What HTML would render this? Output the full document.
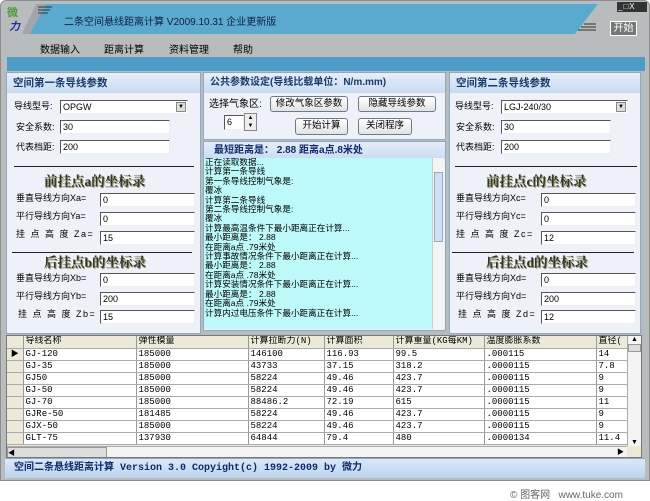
<!DOCTYPE html>
<html><head><meta charset="utf-8"><style>
*{margin:0;padding:0;box-sizing:border-box}
body{width:650px;height:499px;background:#fff;position:relative;overflow:hidden;font-family:"Liberation Sans","Noto Sans CJK SC",sans-serif;font-size:10px;color:#000}
.a{position:absolute}
.frame{left:0;top:0;width:650px;height:481px;background:#b9bcbc;border-radius:6px 6px 0 0;border:1px solid #8a8e90}
.panel{background:#eef2f8;border:1px solid #8fa8c4}
.hdr{position:absolute;left:0;right:0;top:0;height:20px;background:linear-gradient(#e6eef9,#c8dbf1);color:#1a3a6a;font-weight:bold;font-size:10.5px;line-height:20px;padding-left:6px;white-space:nowrap}
.inp{position:absolute;background:#fff;border-top:1px solid #555;border-left:1px solid #555;border-bottom:1px solid #eee;border-right:1px solid #eee;font-size:9px;line-height:12px;padding-left:2px;height:14px}
.lbl{position:absolute;font-size:9px;line-height:11px;white-space:nowrap}
.ttl{position:absolute;font-family:"Liberation Serif","Noto Serif CJK SC",serif;font-weight:bold;font-size:13.5px;line-height:16px;color:#333;text-shadow:1px 1px 0 #9a9a60;white-space:nowrap}
.line{position:absolute;height:1px;background:#222}
.btn{position:absolute;background:linear-gradient(#fff,#e2e2e2);border:1px solid #6a7a90;border-radius:3px;font-size:9.5px;text-align:center;line-height:14px}
.grid td{border-right:1px solid #999;border-bottom:1px solid #aaa;height:12px;line-height:11px;font-size:9px;padding:0 0 0 2px;white-space:nowrap;overflow:hidden;font-family:"Liberation Mono","Noto Sans CJK SC",monospace}
.grid{border-collapse:collapse;table-layout:fixed;background:#fff}
.grid .rh{background:#ece9d8;padding:0}
.grid tr.h td{background:#ece9d8}
</style></head><body>
<div class="a frame"></div>
<svg class="a" style="left:0;top:0" width="650" height="56">
<polygon points="46,4 598,4 598,34 30,34" fill="#5aa9cf"/>
<polygon points="36,4 46,4 30,34 22,34" fill="#a0a6aa"/>
<line x1="38" y1="7" x2="52" y2="7" stroke="#333"/><line x1="38" y1="10" x2="50" y2="10" stroke="#333"/><line x1="38" y1="13" x2="48" y2="13" stroke="#333"/>
<polygon points="598,4 603,4 603,34 575,34" fill="#b9bcbc"/>
<line x1="578" y1="30" x2="596" y2="30" stroke="#333"/><line x1="581" y1="27" x2="596" y2="27" stroke="#333"/><line x1="584" y1="24" x2="596" y2="24" stroke="#333"/>
<rect x="617" y="2" width="30" height="10" fill="#333"/>
</svg>
<div class="a" style="left:7px;top:4px;font-size:11px;font-weight:bold;color:#4a9a3a">微</div>
<div class="a" style="left:9px;top:18px;font-size:11px;font-weight:bold;font-style:italic;color:#2030a0">力</div>
<div class="a" style="left:64px;top:13px;font-size:10px;color:#102040">二条空间悬线距离计算 V2009.10.31 企业更新版</div>
<div class="a" style="left:618px;top:2px;font-size:8px;color:#fff;letter-spacing:1px">_□X</div>
<div class="a" style="left:610px;top:21px;width:27px;height:15px;background:#777;border:1px solid #fff;color:#fff;font-size:10px;text-align:center;line-height:13px">开始</div>
<div class="a" style="top:41px;left:40px;font-size:10px">数据输入</div>
<div class="a" style="top:41px;left:104px;font-size:10px">距离计算</div>
<div class="a" style="top:41px;left:169px;font-size:10px">资料管理</div>
<div class="a" style="top:41px;left:233px;font-size:10px">帮助</div>
<div class="a" style="left:7px;top:57px;width:638px;height:14px;background:#4d9dc8"></div>

<!-- left panel -->
<div class="a panel" style="left:6px;top:72px;width:195px;height:262px">
<div class="hdr">空间第一条导线参数</div></div>
<div class="lbl" style="left:14px;top:101px">导线型号:</div>
<div class="inp" style="left:60px;top:100px;width:128px">OPGW<span style="position:absolute;right:1px;top:1px;width:10px;height:10px;background:#ddd;border:1px solid #888;font-size:6px;line-height:9px;text-align:center">▼</span></div>
<div class="lbl" style="left:16px;top:122px">安全系数:</div>
<div class="inp" style="left:60px;top:120px;width:110px">30</div>
<div class="lbl" style="left:16px;top:142px">代表档距:</div>
<div class="inp" style="left:60px;top:140px;width:110px">200</div>
<div class="line" style="left:14px;top:166px;width:180px"></div>
<div class="ttl" style="left:44px;top:174px">前挂点a的坐标录</div>
<div class="lbl" style="left:16px;top:193px">垂直导线方向Xa=</div>
<div class="inp" style="left:100px;top:193px;width:95px">0</div>
<div class="lbl" style="left:16px;top:211px">平行导线方向Ya=</div>
<div class="inp" style="left:100px;top:212px;width:95px">0</div>
<div class="lbl" style="left:16px;top:229px;letter-spacing:1.5px">挂 点 高 度 Za=</div>
<div class="inp" style="left:100px;top:231px;width:95px">15</div>
<div class="line" style="left:12px;top:252px;width:180px"></div>
<div class="ttl" style="left:44px;top:255px">后挂点b的坐标录</div>
<div class="lbl" style="left:16px;top:273px">垂直导线方向Xb=</div>
<div class="inp" style="left:100px;top:273px;width:95px">0</div>
<div class="lbl" style="left:16px;top:291px">平行导线方向Yb=</div>
<div class="inp" style="left:100px;top:292px;width:95px">200</div>
<div class="lbl" style="left:18px;top:309px;letter-spacing:1.5px">挂 点 高 度 Zb=</div>
<div class="inp" style="left:100px;top:310px;width:95px">15</div>

<!-- middle -->
<div class="a panel" style="left:203px;top:72px;width:243px;height:68px">
<div class="hdr" style="font-size:10px">公共参数设定(导线比载单位：N/m.mm)</div></div>
<div class="lbl" style="left:209px;top:99px;font-size:10px">选择气象区:</div>
<div class="btn" style="left:270px;top:96px;width:78px;height:16px">修改气象区参数</div>
<div class="btn" style="left:358px;top:96px;width:78px;height:16px">隐藏导线参数</div>
<div class="inp" style="left:224px;top:115px;width:20px;height:15px">6</div>
<div class="a" style="left:244px;top:113px;width:13px;height:18px;background:#eee;border:1px solid #888;font-size:6px;line-height:8px;text-align:center">▲<br>▼</div>
<div class="btn" style="left:295px;top:118px;width:53px;height:17px">开始计算</div>
<div class="btn" style="left:358px;top:118px;width:54px;height:17px">关闭程序</div>
<div class="a panel" style="left:203px;top:141px;width:243px;height:190px">
<div class="hdr" style="height:17px;line-height:17px;padding-left:10px;color:#102a6a;font-size:10px">最短距离是：&nbsp;2.88 距离a点.8米处</div></div>
<div class="a" style="left:204px;top:158px;width:228px;height:171px;background:#bdf9f9;font-size:8.6px;line-height:9.4px;padding-left:1px;overflow:hidden;white-space:nowrap;font-family:'Liberation Sans','WenQuanYi Zen Hei',sans-serif">正在读取数据...<br>计算第一条导线<br>第一条导线控制气象是:<br>覆冰<br>计算第二条导线<br>第二条导线控制气象是:<br>覆冰<br>计算最高温条件下最小距离正在计算...<br>最小距离是： 2.88<br>在距离a点 .79米处<br>计算事故情况条件下最小距离正在计算...<br>最小距离是： 2.88<br>在距离a点 .78米处<br>计算安装情况条件下最小距离正在计算...<br>最小距离是： 2.88<br>在距离a点 .79米处<br>计算内过电压条件下最小距离正在计算...</div>
<div class="a" style="left:432px;top:158px;width:12px;height:171px;background:#f2f4f6;border-left:1px solid #ccc"><div style="margin:14px 1px 0;height:70px;background:#cfe0f2;border:1px solid #9ab"></div></div>

<!-- right panel -->
<div class="a panel" style="left:449px;top:72px;width:192px;height:262px">
<div class="hdr">空间第二条导线参数</div></div>
<div class="lbl" style="left:455px;top:101px">导线型号:</div>
<div class="inp" style="left:501px;top:100px;width:127px">LGJ-240/30<span style="position:absolute;right:1px;top:1px;width:10px;height:10px;background:#ddd;border:1px solid #888;font-size:6px;line-height:9px;text-align:center">▼</span></div>
<div class="lbl" style="left:456px;top:122px">安全系数:</div>
<div class="inp" style="left:501px;top:120px;width:110px">30</div>
<div class="lbl" style="left:456px;top:142px">代表档距:</div>
<div class="inp" style="left:501px;top:140px;width:110px">200</div>
<div class="line" style="left:455px;top:166px;width:182px"></div>
<div class="ttl" style="left:486px;top:174px">前挂点c的坐标录</div>
<div class="lbl" style="left:456px;top:193px">垂直导线方向Xc=</div>
<div class="inp" style="left:541px;top:193px;width:95px">0</div>
<div class="lbl" style="left:456px;top:211px">平行导线方向Yc=</div>
<div class="inp" style="left:541px;top:212px;width:95px">0</div>
<div class="lbl" style="left:456px;top:229px;letter-spacing:1.5px">挂 点 高 度 Zc=</div>
<div class="inp" style="left:541px;top:231px;width:95px">12</div>
<div class="line" style="left:452px;top:252px;width:182px"></div>
<div class="ttl" style="left:486px;top:255px">后挂点d的坐标录</div>
<div class="lbl" style="left:456px;top:273px">垂直导线方向Xd=</div>
<div class="inp" style="left:541px;top:273px;width:95px">0</div>
<div class="lbl" style="left:456px;top:291px">平行导线方向Yd=</div>
<div class="inp" style="left:541px;top:292px;width:95px">200</div>
<div class="lbl" style="left:458px;top:309px;letter-spacing:1.5px">挂 点 高 度 Zd=</div>
<div class="inp" style="left:541px;top:310px;width:95px">12</div>

<!-- grid -->
<div class="a" style="left:6px;top:335px;width:636px;height:123px;background:#ece9d8;border:1px solid #777;overflow:hidden">
<table class="grid" style="width:620px">
<colgroup><col style="width:16px"><col style="width:113px"><col style="width:112px"><col style="width:76px"><col style="width:69px"><col style="width:91px"><col style="width:112px"><col style="width:31px"></colgroup>
<tr class="h"><td class="rh"></td><td>导线名称</td><td>弹性模量</td><td>计算拉断力(N)</td><td>计算面积</td><td>计算重量(KG每KM)</td><td>温度膨胀系数</td><td>直径(</td></tr>
<tr><td class="rh" style="font-size:8px;text-align:center">▶</td><td>GJ-120</td><td>185000</td><td>146100</td><td>116.93</td><td>99.5</td><td>.000115</td><td>14</td></tr>
<tr><td class="rh"></td><td>GJ-35</td><td>185000</td><td>43733</td><td>37.15</td><td>318.2</td><td>.0000115</td><td>7.8</td></tr>
<tr><td class="rh"></td><td>GJ50</td><td>185000</td><td>58224</td><td>49.46</td><td>423.7</td><td>.0000115</td><td>9</td></tr>
<tr><td class="rh"></td><td>GJ-50</td><td>185000</td><td>58224</td><td>49.46</td><td>423.7</td><td>.0000115</td><td>9</td></tr>
<tr><td class="rh"></td><td>GJ-70</td><td>185000</td><td>88486.2</td><td>72.19</td><td>615</td><td>.0000115</td><td>11</td></tr>
<tr><td class="rh"></td><td>GJRe-50</td><td>181485</td><td>58224</td><td>49.46</td><td>423.7</td><td>.0000115</td><td>9</td></tr>
<tr><td class="rh"></td><td>GJX-50</td><td>185000</td><td>58224</td><td>49.46</td><td>423.7</td><td>.0000115</td><td>9</td></tr>
<tr><td class="rh"></td><td>GLT-75</td><td>137930</td><td>64844</td><td>79.4</td><td>480</td><td>.0000134</td><td>11.4</td></tr>
</table>
<div class="a" style="left:620px;top:0;width:14px;height:110px;background:#f4f4f4;border-left:1px solid #aaa;font-size:7px;text-align:center">▲<div style="height:8px;background:#ddd;border:1px solid #999;margin-top:1px"></div><div style="position:absolute;bottom:0;width:13px">▼</div></div>
<div class="a" style="left:0;top:110px;width:620px;height:13px;background:#f4f4f4;border-top:1px solid #aaa;font-size:7px;line-height:12px"><span style="display:inline-block;width:100px;height:12px;background:#ddd;border:1px solid #999">◀</span><span style="position:absolute;right:3px">▶</span></div>
</div>

<div class="a" style="left:5px;top:458px;width:640px;height:20px;background:linear-gradient(#dbe8f8,#bdd3ee);border-top:1px solid #8fa8c4;color:#102a6a;font-weight:bold;font-size:10px;line-height:19px;padding-left:9px;font-family:'Liberation Mono','Noto Sans CJK SC',monospace">空间二条悬线距离计算 Version 3.0 Copyight(c) 1992-2009 by 微力</div>
<div class="a" style="left:510px;top:486px;font-size:10px;color:#666">© 图客网 &nbsp;&nbsp;www.tuke.com</div>
</body></html>
